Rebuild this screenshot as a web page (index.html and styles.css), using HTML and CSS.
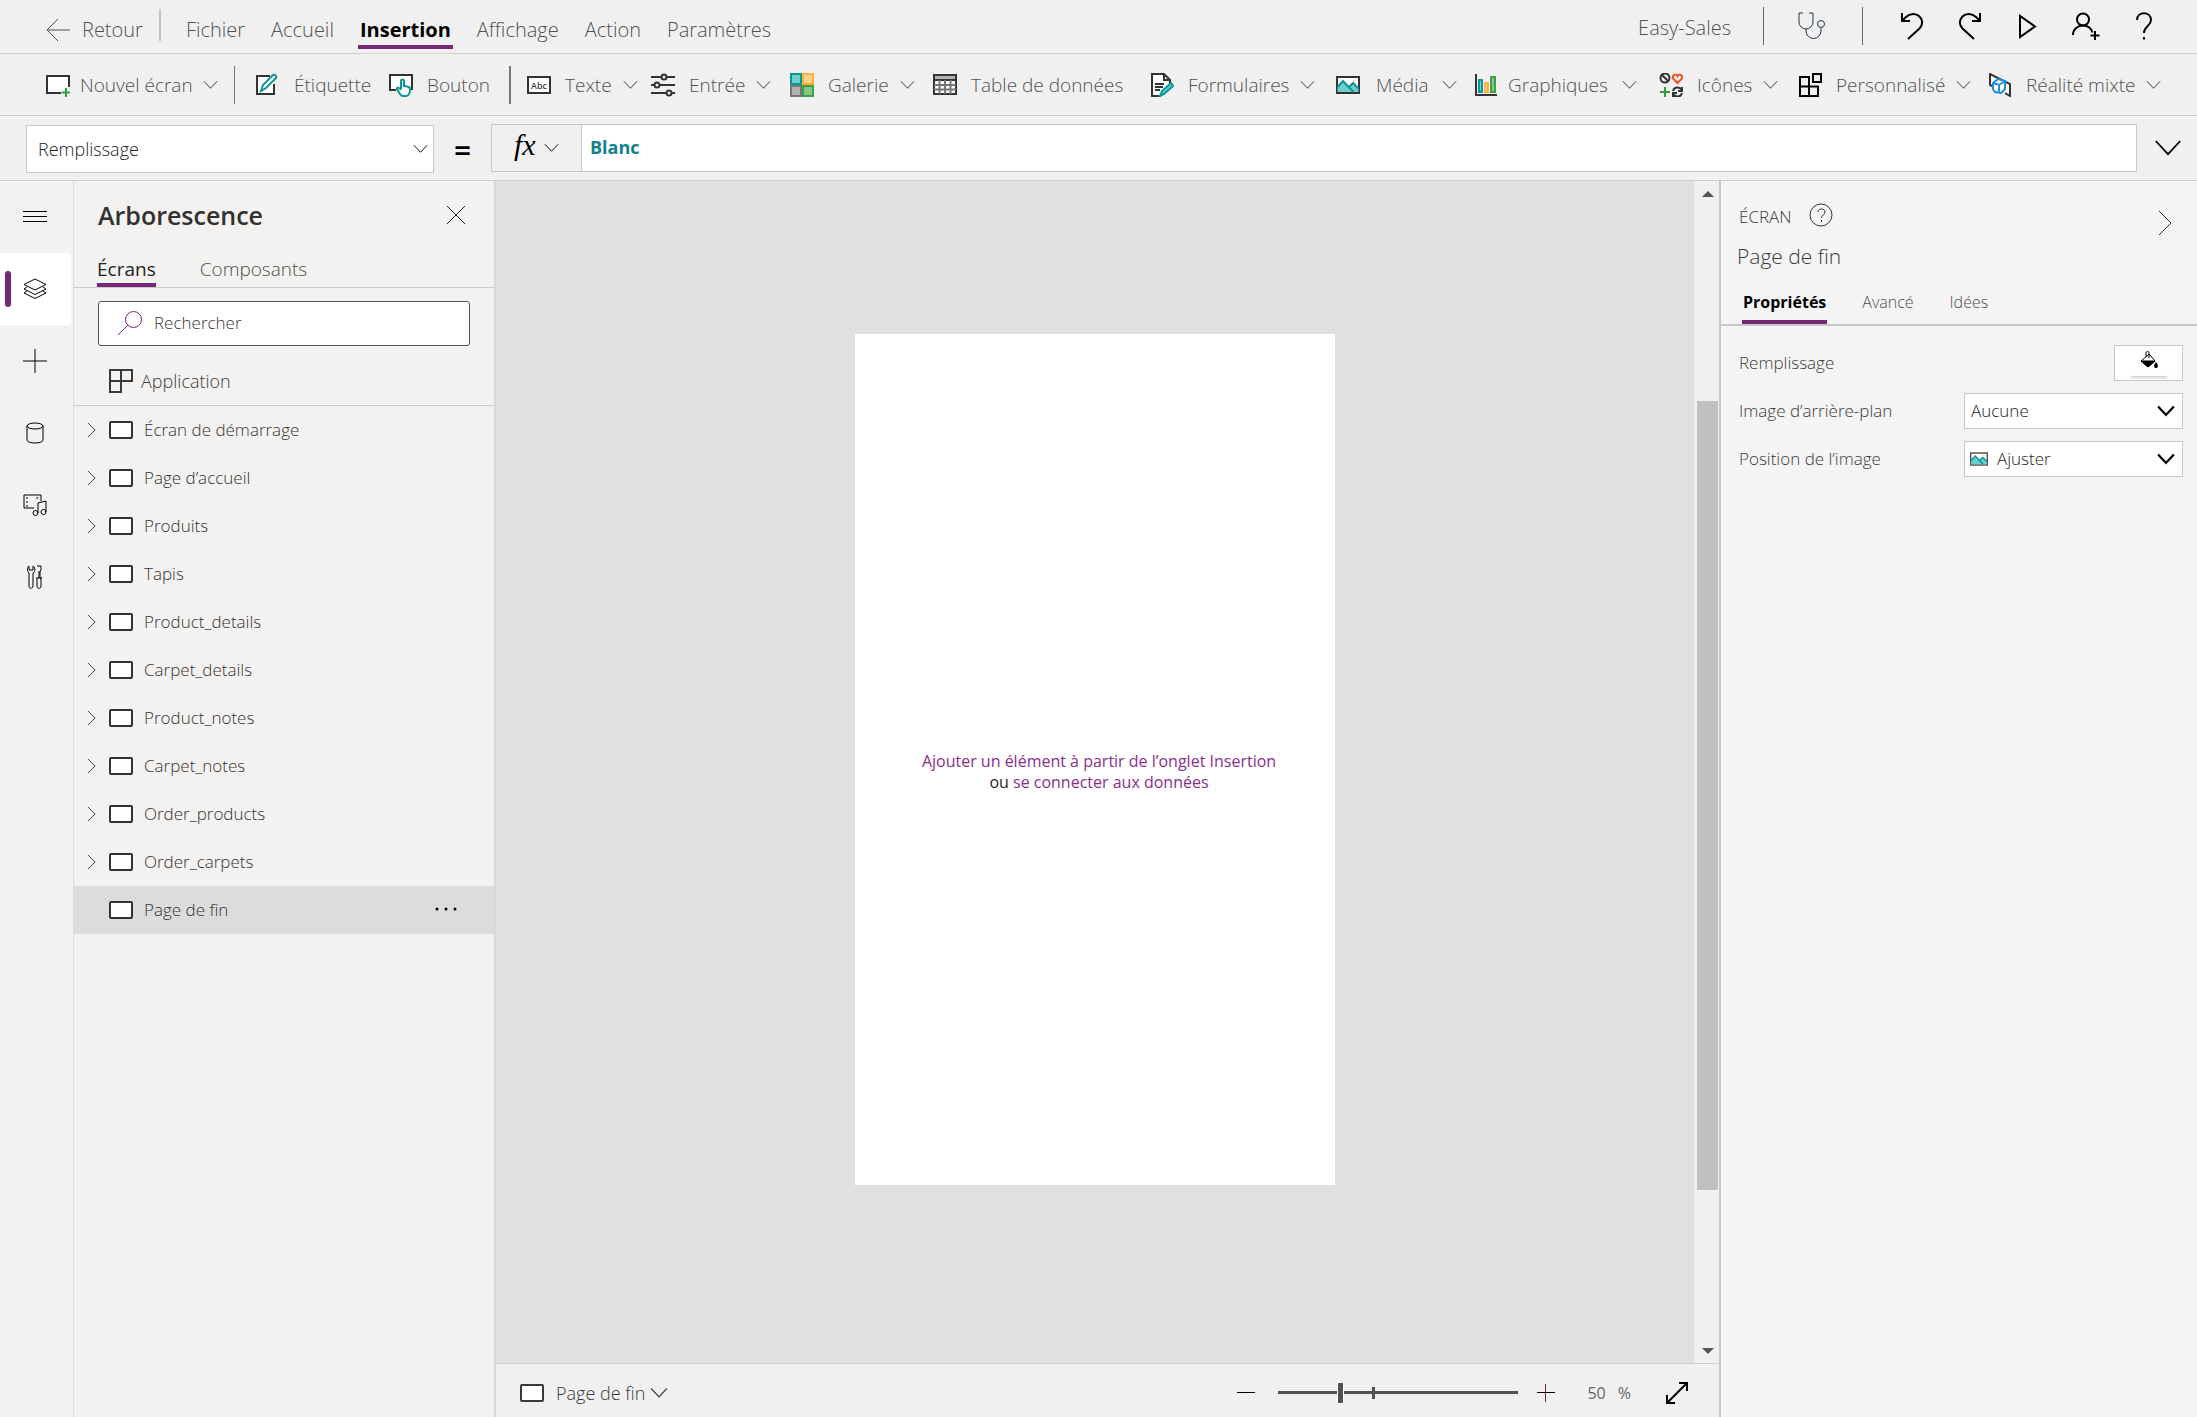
FILE: index.html
```html
<!DOCTYPE html>
<html lang="fr">
<head>
<meta charset="utf-8">
<title>Easy-Sales</title>
<link rel="stylesheet" href="styles.css">
</head>
<body>
<svg class="defs" aria-hidden="true">
  <symbol id="down" viewBox="0 0 16 10"><path d="M1 1l7 7.500L15 1"/></symbol>
  <symbol id="right" viewBox="0 0 10 18"><path d="M1 1l8 8-8 8"/></symbol>
  <symbol id="screen" viewBox="0 0 24 18"><rect x="1" y="1" width="22" height="16" rx="1" fill="#fff"/></symbol>
  <symbol id="picture" viewBox="0 0 24 18"><rect x="1" y="1" width="22" height="16" fill="#fff"/><path d="M1.500 11L7 5l6 6 4-4 5.500 5.500V16h-21z" fill="#69cfcc" stroke="none"/><path d="M1.500 11L7 5l10.500 11M13 11l4-4 5.500 5.500" stroke="#0a9694"/><circle cx="18.500" cy="4.500" r="1" fill="#ffb94a" stroke="none"/></symbol>
</svg>

<header class="topbar">
  <button class="back"><svg class="i24" viewBox="0 0 24 24"><path d="M24 12H1M12 1L1 12l11 11"/></svg><span>Retour</span></button>
  <nav class="menu">
    <a href="#">Fichier</a><a href="#">Accueil</a><a href="#" class="current">Insertion</a><a href="#">Affichage</a><a href="#">Action</a><a href="#">Paramètres</a>
  </nav>
  <span class="appname">Easy-Sales</span>
  <div class="checker"><button aria-label="Vérificateur"><svg class="i28" viewBox="0 0 28 28"><path d="M5 1H1v9a7 7 0 0 0 14 0V1h-4M8 17v2a7.500 7.500 0 0 0 15 0v-3"/><circle cx="23" cy="12" r="3.500"/></svg></button></div>
  <div class="actions">
    <button aria-label="Annuler"><svg class="i28" viewBox="0 0 28 28"><path d="M4 1v8h8M4 9l4-4C12 1 18 1 21.500 4.500s3.500 8.500 0 12L10 27"/></svg></button>
    <button aria-label="Rétablir"><svg class="i28" viewBox="0 0 28 28"><path d="M24 1v8h-8M24 9l-4-4C16 1 10 1 6.500 4.500s-3.500 8.500 0 12L18 27"/></svg></button>
    <button aria-label="Aperçu"><svg class="i28" viewBox="0 0 28 28"><path d="M6 4v21l15-10.500z"/></svg></button>
    <button aria-label="Partager"><svg class="i28" viewBox="0 0 28 28"><circle cx="11" cy="7.500" r="6"/><path d="M1 23c0-6 5-9.500 10-9.500 4.500 0 8 2.500 9.500 7M23 19v9M18.500 23.500h9"/></svg></button>
    <button aria-label="Aide"><svg class="i28" viewBox="0 0 28 28"><path d="M7 8c0-9 14-9 14 0 0 6-7 6-7 13M14 25v2.500"/></svg></button>
  </div>
</header>

<div class="ribbon">
  <button class="tight split"><svg class="i24" viewBox="0 0 24 24"><path d="M15 20H1V3h22v11" fill="#fff"/><path d="M20 15v9M15.500 19.500h9" stroke="#2f9e3f"/></svg><span>Nouvel écran</span><svg class="down"><use href="#down"/></svg></button>
  <button><svg class="i24" viewBox="0 0 24 24"><path d="M14 3H1v18h17V11" fill="#fff"/><path d="M5 18l2-6L17 2c2-1 4 1 3 3L10 15z" stroke="#0a9694" fill="#fff"/></svg><span>Étiquette</span></button>
  <button class="split"><svg class="i24" viewBox="0 0 24 24"><path d="M7 17H1V2h22v14h-3" fill="#fff"/><path d="M12 16V8c0-2 3-2 3 0v5l5 1c2 1 1 9-3 9h-3c-3 0-4-4-6-7 0-2 2-2 4 1" fill="#fff" stroke="#0a9694"/></svg><span>Bouton</span></button>
  <button><svg class="i24" viewBox="0 0 24 24"><rect x="1" y="4" width="22" height="16" fill="#fff"/><text x="4" y="16">Abc</text></svg><span>Texte</span><svg class="down"><use href="#down"/></svg></button>
  <button><svg class="i24" viewBox="0 0 24 24"><path d="M0 4h11M15 4h9M0 12h4M8 12h16M0 20h16M20 20h4"/><circle cx="13" cy="4" r="2.500"/><circle cx="6" cy="12" r="2.500"/><circle cx="18" cy="20" r="2.500"/></svg><span>Entrée</span><svg class="down"><use href="#down"/></svg></button>
  <button><svg class="i24" viewBox="0 0 24 24"><path d="M1 1h10v10H1z" fill="#6fcfcd" stroke="#0a9694"/><path d="M13 1h10v10H13z" fill="#ffd08a" stroke="#ffb03b"/><path d="M1 13h10v10H1z" fill="#b3b3b3" stroke="#777"/><path d="M13 13h10v10H13z" fill="#86c48a" stroke="#3f9e46"/></svg><span>Galerie</span><svg class="down"><use href="#down"/></svg></button>
  <button><svg class="i24" viewBox="0 0 24 24"><path d="M1 2h22v19H1z" fill="#fff"/><path d="M1 2h22v5H1z" fill="#b3b3b3"/><path d="M1 12h22M1 16.500h22M6.500 7v14M12 7v14M17.500 7v14" stroke="#777"/></svg><span>Table de données</span></button>
  <button><svg class="i24" viewBox="0 0 24 24"><path d="M9 23H2V1h12l6 6v3M14 1v6h6" fill="#fff"/><path d="M5 11h9M5 14h8M5 17h5"/><path d="M10 23l2-5 9-8 2 3-9 8z" stroke="#0a9694" fill="#69cfcc"/></svg><span>Formulaires</span><svg class="down"><use href="#down"/></svg></button>
  <button class="wide"><svg class="pic"><use href="#picture"/></svg><span>Média</span><svg class="down"><use href="#down"/></svg></button>
  <button class="tight"><svg class="i24" viewBox="0 0 24 24"><path d="M2 1v21h21"/><path d="M5 7h3v12H5z" fill="#6fcfcd" stroke="#0a9694"/><path d="M11 10h3v9h-3z" fill="#ffd08a" stroke="#ffb03b"/><path d="M17 4h4v15h-4z" fill="#86c48a" stroke="#3f9e46"/></svg><span>Graphiques</span><svg class="down far"><use href="#down"/></svg></button>
  <button><svg class="i24" viewBox="0 0 24 24"><circle cx="6" cy="5" r="4.500"/><path d="M3 2l6 6"/><path d="M18.500 10L14 5.500C13 2 17 0 18.500 3 20 0 24 2 23 5.500z" stroke="#f04e23"/><path d="M6 14v10M1 19h10" stroke="#2f9e3f"/><path d="M14 18c1-4 6-5 9-1M23 14v4h-4M23 20c-1 4-6 5-9 1M14 24v-4h4"/></svg><span>Icônes</span><svg class="down"><use href="#down"/></svg></button>
  <button class="dark"><svg class="i24" viewBox="0 0 24 24"><path d="M2 4h9v19H2zM2 13.500h18V23H2M15 1h8v8h-8z"/></svg><span>Personnalisé</span><svg class="down"><use href="#down"/></svg></button>
  <button><svg class="i24" viewBox="0 0 24 24"><path d="M6 14l-4-2V1l20 10v12l-5-3" fill="#fff"/><path d="M5 10l5-4 7 2v8l-4 4-6-1-2-3zM5 10l6 2 6-4M11 12v8" stroke="#1b8fdb" fill="#fff"/></svg><span>Réalité mixte</span><svg class="down"><use href="#down"/></svg></button>
</div>

<div class="formula">
  <div class="pick property"><select aria-label="Propriété"><option>Remplissage</option></select><svg class="down"><use href="#down"/></svg></div>
  <span class="equals">=</span>
  <div class="editor"><button aria-label="Fonction"><i>fx</i><svg class="down"><use href="#down"/></svg></button><input type="text" value="Blanc" aria-label="Formule"></div>
  <button class="expand" aria-label="Développer"><svg class="down"><use href="#down"/></svg></button>
</div>

<div class="workspace">
  <nav class="rail">
    <button aria-label="Menu"><svg class="i24" viewBox="0 0 24 24"><path d="M0 6.500h24M0 11.500h24M0 16.500h24"/></svg></button>
    <button class="active" aria-label="Arborescence"><svg class="i24" viewBox="0 0 24 24"><path d="M12 2l11 5.500L12 13 1 7.500zM4 10l-3 2 11 5.500L23 12l-3-2M4 14l-3 2 11 5.500L23 16l-3-2"/></svg></button>
    <button aria-label="Insérer"><svg class="i24" viewBox="0 0 24 24"><path d="M12 0v24M0 12h24"/></svg></button>
    <button aria-label="Données"><svg class="i24" viewBox="0 0 24 24"><ellipse cx="12" cy="5" rx="8" ry="3"/><path d="M4 5v14c0 4 16 4 16 0V5"/></svg></button>
    <button aria-label="Média"><svg class="i24" viewBox="0 0 24 24"><path d="M11 15H1V2h17v6"/><path d="M4 4v10M14 4v4" stroke-dasharray="2 2"/><path d="M15 20V10l8-2v11"/><circle cx="12.500" cy="20" r="2.500"/><circle cx="20.500" cy="19" r="2.500"/></svg></button>
    <button aria-label="Outils"><svg class="i24" viewBox="0 0 24 24"><path d="M6 8C3 5 5 1 6 1v4h4V1c2 1 3 5 0 7v13c0 3-4 3-4 0zM14 1h4v4l-1 1v7h2M16 6v7M13 13h1v8c0 3 4 3 4 0v-8h-4"/></svg></button>
  </nav>

  <aside class="tree">
    <div class="treehead"><h1>Arborescence</h1><button aria-label="Fermer"><svg class="i18" viewBox="0 0 18 18"><path d="M0 0l18 18M18 0L0 18"/></svg></button></div>
    <div class="treetabs"><button class="on">Écrans</button><button>Composants</button></div>
    <label class="search"><svg class="i24" viewBox="0 0 24 24"><circle cx="15.500" cy="8.500" r="8"/><path d="M10 14L0 24"/></svg><input type="text" placeholder="Rechercher" aria-label="Rechercher"></label>
    <button class="app"><svg class="i24" viewBox="0 0 24 24"><path d="M1 1h22v11H1zM1 1h11v22H1z"/></svg>Application</button>
    <ul>
      <li><svg class="right"><use href="#right"/></svg><svg class="screen"><use href="#screen"/></svg><span>Écran de démarrage</span></li>
      <li><svg class="right"><use href="#right"/></svg><svg class="screen"><use href="#screen"/></svg><span>Page d’accueil</span></li>
      <li><svg class="right"><use href="#right"/></svg><svg class="screen"><use href="#screen"/></svg><span>Produits</span></li>
      <li><svg class="right"><use href="#right"/></svg><svg class="screen"><use href="#screen"/></svg><span>Tapis</span></li>
      <li><svg class="right"><use href="#right"/></svg><svg class="screen"><use href="#screen"/></svg><span>Product_details</span></li>
      <li><svg class="right"><use href="#right"/></svg><svg class="screen"><use href="#screen"/></svg><span>Carpet_details</span></li>
      <li><svg class="right"><use href="#right"/></svg><svg class="screen"><use href="#screen"/></svg><span>Product_notes</span></li>
      <li><svg class="right"><use href="#right"/></svg><svg class="screen"><use href="#screen"/></svg><span>Carpet_notes</span></li>
      <li><svg class="right"><use href="#right"/></svg><svg class="screen"><use href="#screen"/></svg><span>Order_products</span></li>
      <li><svg class="right"><use href="#right"/></svg><svg class="screen"><use href="#screen"/></svg><span>Order_carpets</span></li>
      <li class="selected"><span class="right"></span><svg class="screen"><use href="#screen"/></svg><span>Page de fin</span><button aria-label="Plus"><svg class="more" viewBox="0 0 24 6"><circle cx="3" cy="3" r="1.500"/><circle cx="12" cy="3" r="1.500"/><circle cx="21" cy="3" r="1.500"/></svg></button></li>
    </ul>
  </aside>

  <main class="stage">
    <div class="canvas">
      <div class="board"><p><a href="#">Ajouter un élément à partir de l’onglet Insertion</a><br>ou <a href="#">se connecter aux données</a></p></div>
    </div>
    <div class="scroll"><svg viewBox="0 0 12 6"><path d="M0 6l6-6 6 6z"/></svg><div class="track"><div class="thumb"></div></div><svg viewBox="0 0 12 6"><path d="M0 0l6 6 6-6z"/></svg></div>
    <footer>
      <button class="where"><svg class="screen"><use href="#screen"/></svg>Page de fin<svg class="down"><use href="#down"/></svg></button>
      <button aria-label="Zoom arrière"><svg class="i18" viewBox="0 0 18 18"><path d="M0 8.500h18"/></svg></button>
      <div class="slider"><input type="range" value="25" aria-label="Zoom"></div>
      <button aria-label="Zoom avant"><svg class="i18" viewBox="0 0 18 18"><path d="M0 8.500h18"/><path d="M8.500 0v18" stroke="#7b1f4b"/></svg></button>
      <span class="percent"><span>50</span><span>%</span></span>
      <button aria-label="Ajuster à la fenêtre"><svg class="i24" viewBox="0 0 24 24"><path d="M2 22L22 2M14 2h8v8M2 14v8h8"/></svg></button>
    </footer>
  </main>

  <aside class="props">
    <div class="kind">ÉCRAN<svg class="i24" viewBox="0 0 24 24"><circle cx="12" cy="12" r="11"/><path d="M9 9c0-4 7-4 7 0 0 3-3.500 3-3.500 6M12.500 17v2"/></svg><button aria-label="Réduire"><svg class="collapse" viewBox="0 0 14 26"><path d="M1 1l12 12L1 25"/></svg></button></div>
    <h2>Page de fin</h2>
    <div class="proptabs"><button class="on">Propriétés</button><button>Avancé</button><button>Idées</button></div>
    <div class="fields">
      <label for="fill">Remplissage</label>
      <button id="fill" class="fill" aria-label="Remplissage"><svg viewBox="0 0 18 18"><path d="M1 10l8-7 6 7-7 6z" fill="#fff"/><path d="M1 10h14l-7 6z" fill="#000"/><path d="M6 6V2c0-2 3-2 3 0v5"/><path d="M16 11c3 4 2 6 0 6s-3-2 0-6z" fill="#000" stroke="none"/></svg><span></span></button>
      <label for="bg">Image d’arrière-plan</label>
      <div class="pick"><select id="bg"><option>Aucune</option></select><svg class="down"><use href="#down"/></svg></div>
      <label for="pos">Position de l’image</label>
      <div class="pick withicon"><svg class="small"><use href="#picture"/></svg><select id="pos"><option>Ajuster</option></select><svg class="down"><use href="#down"/></svg></div>
    </div>
  </aside>
</div>
</body>
</html>
```
FILE: styles.css
```css
* { box-sizing: border-box; }
body {
  margin: 0;
  min-height: 100vh;
  display: flex;
  flex-direction: column;
  background: #f0f0f0;
  color: #3b3a39;
  font: 300 18px/24px "Open Sans", "Noto Sans", sans-serif;
}
button, input, select { font: inherit; color: inherit; border: 0; background: none; padding: 0; margin: 0; border-radius: 0; outline: 0; }
button { display: flex; align-items: center; white-space: nowrap; }
a { color: inherit; text-decoration: none; }
svg { fill: none; stroke: currentColor; stroke-width: 2; flex: none; display: block; }
.defs { position: absolute; width: 0; height: 0; }
.i18 { width: 18px; height: 18px; }
.i24 { width: 24px; height: 24px; }
.i28 { width: 28px; height: 28px; }
.down { width: 15px; height: 10px; stroke-width: 1; }
.right { width: 9px; height: 16px; stroke-width: 1; }
.screen { width: 24px; height: 18px; }
.pic { width: 24px; height: 18px; }

.topbar { height: 54px; display: flex; align-items: flex-start; border-bottom: 1px solid #d0d0d0; padding: 0 39px 0 46px; font-size: 20px; color: #505050; }
.back { height: 32px; margin-top: 9px; padding-right: 16px; gap: 12px; border-right: 2px solid #c4c4c4; }
.back svg { stroke-width: 1; margin-top: 10px; }
.back span { padding-top: 10px; }
.menu { display: flex; gap: 22px; padding: 15px 0 0 23px; flex: 1; }
.menu a { height: 34px; line-height: 30px; padding: 0 2px; border-bottom: 4px solid transparent; }
.menu .current { color: #000; font-weight: 700; border-color: #742774; }
.appname { line-height: 28px; margin: 14px 32px 0 0; }
.checker { border: solid #666; border-width: 0 1px; height: 38px; margin-top: 7px; padding: 0 36px 0 34px; display: flex; color: #234; }
.checker svg { stroke-width: 1; }
.actions { display: flex; gap: 30px; margin-left: 35px; padding-top: 12px; color: #000; }

.ribbon {
  height: 62px; padding: 12px 26px 0 46px; border-bottom: 1px solid #cfcfcf; color: #505050; font-size: 19px;
  display: grid; align-items: start;
  grid-template-columns: 210fr 133fr 138fr 124fr 139fr 143fr 217fr 186fr 138fr 185fr 139fr 190fr 183fr;
}
.ribbon button { height: 38px; gap: 14px; min-width: 0; }
.ribbon .tight { gap: 10px; }
.ribbon .wide { gap: 16px; }
.ribbon svg { color: #333; }
.ribbon .dark svg:first-child { color: #000; }
.ribbon .down { margin-left: -3px; }
.ribbon .tight .down { margin-left: 0; }
.ribbon .tight .far { margin-left: 4px; }
.ribbon .split { border-right: 2px solid #777; margin-right: 16px; }
.ribbon .split:first-child { margin-right: 21px; border-right-width: 1px; }
.ribbon text { font: 600 9px "Open Sans", sans-serif; fill: #444; stroke: none; }

.formula { height: 65px; display: flex; align-items: flex-start; padding: 8px 15px 0 26px; border-bottom: 1px solid #cfcfcf; }
.pick { display: grid; grid-template-columns: 1fr 25px; align-items: center; background: #fff; border: 1px solid #c8c8c8; height: 36px; color: #222; }
.pick select { appearance: none; grid-area: 1 / 1 / 2 / 3; width: 100%; height: 100%; padding-left: 6px; }
.pick .down { grid-area: 1 / 2; width: 18px; height: 12px; stroke-width: 2; pointer-events: none; color: #000; }
.property { width: 408px; height: 48px; margin-top: 1px; grid-template-columns: 1fr 20px; }
.property select { padding-left: 11px; }
.property .down { width: 15px; height: 10px; stroke-width: 1; }
.equals { width: 57px; text-align: center; font-size: 30px; line-height: 48px; font-weight: 600; color: #000; padding-top: 3px; }
.editor { flex: 1; display: flex; height: 48px; border: 1px solid #c8c8c8; }
.editor button { width: 90px; gap: 8px; padding-left: 22px; border-right: 1px solid #c8c8c8; color: #000; }
.editor i { font: italic 30px/40px "Liberation Serif", serif; padding-bottom: 6px; }
.editor input { flex: 1; min-width: 0; background: #fff; color: #12828a; font-weight: 700; padding: 0 8px 2px; }
.expand { height: 48px; margin-left: 17px; color: #000; }
.expand svg { width: 28px; height: 18px; }

.workspace { flex: 1; display: grid; grid-template-columns: 74px 422px minmax(0, 1fr) 478px; }
.rail { background: #f3f2f0; border-right: 1px solid #dcdcdc; }
.rail button { width: 71px; height: 72px; padding-left: 23px; color: #222; }
.rail .active { background: #fff; border-radius: 0 4px 4px 0; padding-left: 5px; gap: 12px; }
.rail svg { stroke-width: 1; color: #000; }
.rail .active::before { content: ""; width: 6px; height: 36px; border-radius: 3px; background: #742774; }

.tree { background: #f3f2f0; border-right: 2px solid #d8d8d8; }
.treehead { display: flex; align-items: center; justify-content: space-between; padding: 16px 29px 0 24px; height: 52px; }
h1 { margin: 0; font-size: 25px; line-height: 32px; font-weight: 600; color: #323130; }
.treehead svg { stroke-width: 1; color: #222; }
.treetabs { display: flex; gap: 44px; height: 55px; padding-left: 23px; border-bottom: 1px solid #ccc; font-size: 19px; align-items: flex-end; }
.treetabs button { height: 32px; border-bottom: 4px solid transparent; color: #504e4c; }
.treetabs .on { border-color: #742774; color: #222; font-weight: 500; }
.search { display: flex; align-items: center; gap: 12px; margin: 13px 24px 0; padding: 0 19px 1px 19px; height: 45px; background: #fff; border: 1px solid #555; border-radius: 3px; font-size: 17px; }
.search svg { stroke-width: 1; color: #742774; }
.search input { flex: 1; min-width: 0; }
.search input::placeholder { color: #333; opacity: 1; }
.app { width: 100%; height: 60px; padding: 11px 0 0 35px; gap: 8px; border-bottom: 1px solid #ccc; }
ul { list-style: none; margin: 0; padding: 0; font-size: 17px; color: #333; }
li { display: flex; align-items: center; height: 48px; padding: 0 24px 0 13px; }
li .screen { margin: 0 11px 0 13px; }
.selected { background: #dcdcdc; }
.selected button { margin-left: auto; height: 24px; padding: 0 12px 3px 0; }
.more { width: 24px; height: 6px; fill: #000; stroke: none; }

.stage { display: grid; grid-template: 1fr 54px / minmax(0, 1fr) 25px; }
.canvas { background: #e0e0e0; padding: 153px 24px 177px; display: flex; justify-content: center; align-items: flex-start; }
.board { background: #fff; width: 480px; aspect-ratio: 480 / 851; display: flex; align-items: center; justify-content: center; padding: 24px 0 0 8px; }
.board p { margin: 0; text-align: center; font-size: 16px; line-height: 21px; font-weight: 400; color: #222; white-space: nowrap; }
.board a { color: #8b2e8b; }
.scroll { display: flex; flex-direction: column; align-items: center; gap: 8px; padding: 10px 1px 9px 3px; }
.scroll svg { width: 12px; height: 6px; fill: #555; stroke: none; }
.track { flex: 1; width: 100%; display: flex; flex-direction: column; padding-top: 196px; }
.thumb { background: #c0c0c0; height: 84%; }
footer { grid-column: 1 / 3; border-top: 1px solid #cfcfcf; display: flex; align-items: center; padding: 4px 30px 0 24px; }
.where { gap: 12px; margin-right: auto; }
.where .down { width: 18px; height: 12px; margin-left: -7px; }
footer .i18 { stroke-width: 1; color: #000; }
footer .i24 { color: #000; }
.slider { position: relative; width: 240px; margin: 0 19px 0 23px; display: flex; }
.slider input { appearance: none; width: 100%; height: 22px; background: linear-gradient(#505050, #505050) center / 100% 3px no-repeat; }
.slider input::-webkit-slider-thumb { appearance: none; width: 7px; height: 22px; background: #505050; border: 1px solid #fff; }
.slider::after { content: ""; position: absolute; left: 39%; top: 5px; width: 3px; height: 12px; background: #505050; }
.percent { display: flex; gap: 12px; margin: 0 34px 0 32px; font-size: 16px; font-weight: 400; color: #666; }

.props { background: #f4f4f4; border-left: 2px solid #c8c8c8; }
.kind { display: flex; align-items: center; gap: 17px; padding: 22px 25px 0 18px; font-size: 17px; height: 50px; line-height: 28px; }
.kind svg { stroke-width: 1; color: #333; }
.kind > svg { margin-bottom: 4px; }
.kind button { margin: 0 0 0 auto; padding-top: 12px; }
.collapse { width: 14px; height: 26px; }
h2 { margin: 0 0 0 16px; padding-top: 9px; font-size: 21px; line-height: 32px; font-weight: 300; height: 53px; }
.proptabs { display: flex; gap: 34px; height: 42px; align-items: flex-end; padding-left: 21px; border-bottom: 2px solid #c8c8c8; font-size: 16px; }
.proptabs button { height: 40px; padding: 0 1px; border-bottom: 4px solid transparent; color: #505050; }
.proptabs .on { font-weight: 700; color: #000; border-color: #742774; }
.fields { display: grid; grid-template-columns: 1fr 219px; gap: 12px 0; padding: 19px 14px 0 18px; align-items: center; font-size: 17px; }
.fill { justify-self: end; flex-direction: column; width: 69px; height: 36px; background: #fff; border: 1px solid #c8c8c8; padding-top: 5px; gap: 3px; }
.fill svg { width: 18px; height: 18px; stroke-width: 1; color: #000; }
.fill span { width: 36px; height: 4px; box-shadow: 0 2px 3px #ccc; }
.withicon .small { grid-area: 1 / 1; margin-left: 5px; width: 18px; height: 14px; color: #555; position: relative; }
.withicon select { padding-left: 32px; }
```
